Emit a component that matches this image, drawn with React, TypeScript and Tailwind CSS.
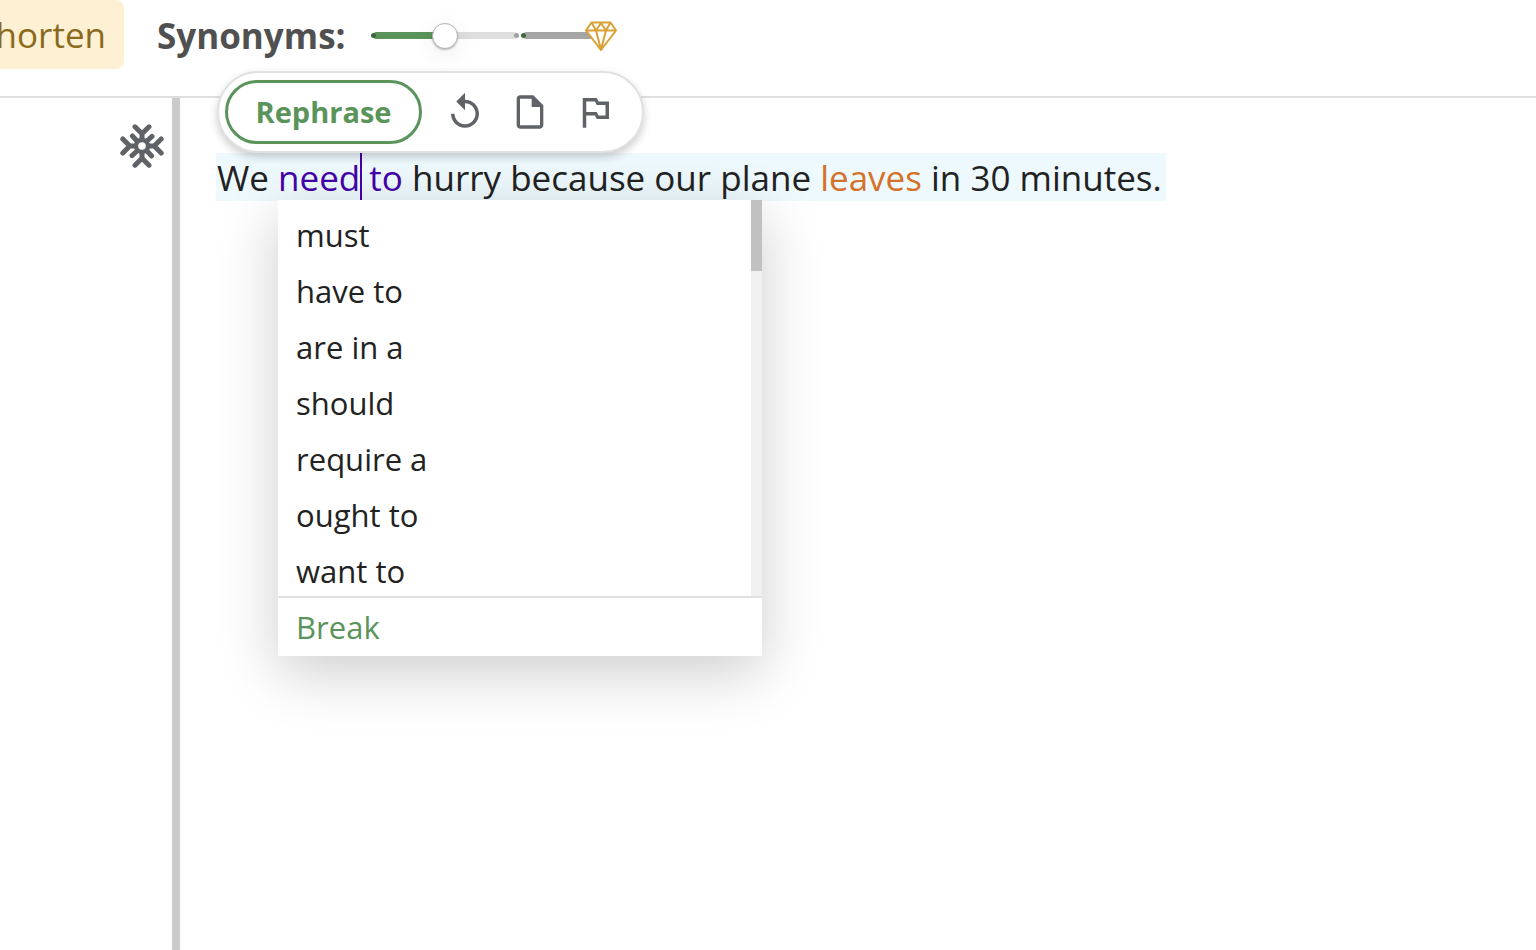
import React, { useState } from 'react'
import { MdOutlineInsertDriveFile, MdOutlinedFlag, MdReplay } from 'react-icons/md'

const synonyms = ['must', 'have to', 'are in a', 'should', 'require a', 'ought to', 'want to']

const SnowflakeIcon: React.FC = () => (
  <svg viewBox="-22 -22 44 44" className="size-11" fill="none" stroke="currentColor" strokeWidth="5" strokeLinecap="round" strokeLinejoin="round">
    <circle r="6" strokeWidth="4.4" />
    {[0, 90, 180, 270].map((angle) => (
      <g key={angle} transform={`rotate(${angle})`}>
        <path d="M-7 -19.2L0 -12.2L7 -19.2M0 -12.2V-7M5 -5L10 -9.6" />
      </g>
    ))}
  </svg>
)

const DiamondIcon: React.FC = () => (
  <svg viewBox="0 0 32 31" className="h-[31px] w-8" fill="none" stroke="#d9a033" strokeWidth="2" strokeLinejoin="round">
    <path fill="#fff" d="M6.5 2.5H25.5L31 10.5L16 30L1 10.5Z" />
    <path d="M1 10.5H31M6.5 2.5L11 10.5L16 3L21 10.5L25.5 2.5M11 10.5L16 29.5L21 10.5" />
  </svg>
)

const Header: React.FC = () => {
  const [level, setLevel] = useState(50)

  return (
    <header className="border-b-2 border-[#e0e0e0] pb-[25px]">
      <div className="flex h-[71px] items-center">
        <button className="flex h-[69px] w-[124px] items-center justify-end self-start overflow-hidden rounded-r-lg bg-[#fdf0d3] pr-[18px] text-[#8a6a1c]">
          Shorten
        </button>
        <label htmlFor="synonyms" className="ml-[33px] font-bold text-[#505050]">
          Synonyms:
        </label>
        <div className="relative ml-[27px] flex items-center">
          <input
            id="synonyms"
            type="range"
            value={level}
            onChange={(e) => setLevel(Number(e.target.value))}
            className="h-[7px] w-36 appearance-none rounded-full bg-[#dedede] [&::-webkit-slider-thumb]:size-[26px] [&::-webkit-slider-thumb]:appearance-none [&::-webkit-slider-thumb]:rounded-full [&::-webkit-slider-thumb]:border [&::-webkit-slider-thumb]:border-[#b4b4b4] [&::-webkit-slider-thumb]:bg-white [&::-webkit-slider-thumb]:shadow-[0_1px_2px_rgba(0,0,0,0.25),0_6px_24px_rgba(0,0,0,0.08)]"
            style={{ backgroundImage: `linear-gradient(to right, #5a945b ${level}%, transparent ${level}%)` }}
          />
          <span className="absolute -left-0.5 size-[5px] rounded-full bg-[#3d683e]" />
          <span className="absolute -right-0.5 size-[5px] rounded-full bg-[#a0a0a0]" />
        </div>
        <div className="relative ml-1.5 flex items-center">
          <span className="h-[7px] w-[68px] rounded-l-full bg-[#a6a6a6]" />
          <span className="absolute -left-0.5 size-[5px] rounded-full bg-[#3d683e]" />
        </div>
        <span className="relative -ml-1.5 flex">
          <DiamondIcon />
        </span>
      </div>
    </header>
  )
}

const Toolbar: React.FC = () => (
  <div className="absolute -top-[27px] left-[37px] z-10 flex items-center rounded-full border-2 border-[#dfe1e2] bg-white py-[7px] pr-[26px] pl-1.5 text-[#5f6368] shadow-[0_4px_8px_rgba(0,0,0,0.2)]">
    <button className="h-16 w-[197px] rounded-full border-3 border-[#5a945b] text-[29px] font-bold text-[#5a945b]">
      Rephrase
    </button>
    <div className="ml-[22px] flex items-center gap-[23px]">
      <button aria-label="Undo" className="flex size-[42px] items-center justify-center">
        <MdReplay size={42} />
      </button>
      <button aria-label="Copy" className="flex size-[42px] items-center justify-center">
        <MdOutlineInsertDriveFile size={40} />
      </button>
      <button aria-label="Report" className="flex size-[42px] items-center justify-center">
        <MdOutlinedFlag size={42} />
      </button>
    </div>
  </div>
)

const SynonymMenu: React.FC = () => (
  <span className="absolute top-[45px] left-0 block w-[484px] bg-white text-[31px] text-[#222] shadow-[0_16px_56px_rgba(0,0,0,0.2)]">
    <span className="flex h-[396px] overflow-hidden">
      <span className="flex flex-1 flex-col pt-[7px]">
        {synonyms.map((word) => (
          <button key={word} className="h-14 shrink-0 px-[18px] text-left">
            {word}
          </button>
        ))}
      </span>
      <span className="w-[11px] bg-[#f0f0f0]">
        <span className="block h-[71px] bg-[#c1c1c1]" />
      </span>
    </span>
    <button className="block h-[60px] w-full border-t-2 border-[#e0e0e0] px-[18px] text-left text-[#5a945b]">
      Break
    </button>
  </span>
)

export default function App() {
  return (
    <div className="flex min-h-screen flex-col overflow-hidden bg-white font-['Open_Sans',sans-serif] text-[35px] leading-[46px] text-[#222]">
      <Header />
      <main className="flex flex-1">
        <aside className="flex w-[180px] items-start justify-end border-r-8 border-[#cbcbcb] pt-[26px] pr-2 text-[#5f6368]">
          <button aria-label="Freeze words">
            <SnowflakeIcon />
          </button>
        </aside>
        <section className="relative flex-1 pt-[55px] pl-9">
          <Toolbar />
          <p className="w-fit bg-[#eef9fe] pt-0.5 pr-1 pl-px whitespace-nowrap">
            We{' '}
            <span className="relative inline-block text-[#4403a8]">
              need
              <span className="-mt-0.5 -mr-0.5 inline-block h-[47px] w-0.5 bg-[#4403a8] align-top" /> to
              <SynonymMenu />
            </span>{' '}
            hurry because our plane <span className="text-[#d4722a]">leaves</span> in 30 minutes.
          </p>
        </section>
      </main>
    </div>
  )
}
